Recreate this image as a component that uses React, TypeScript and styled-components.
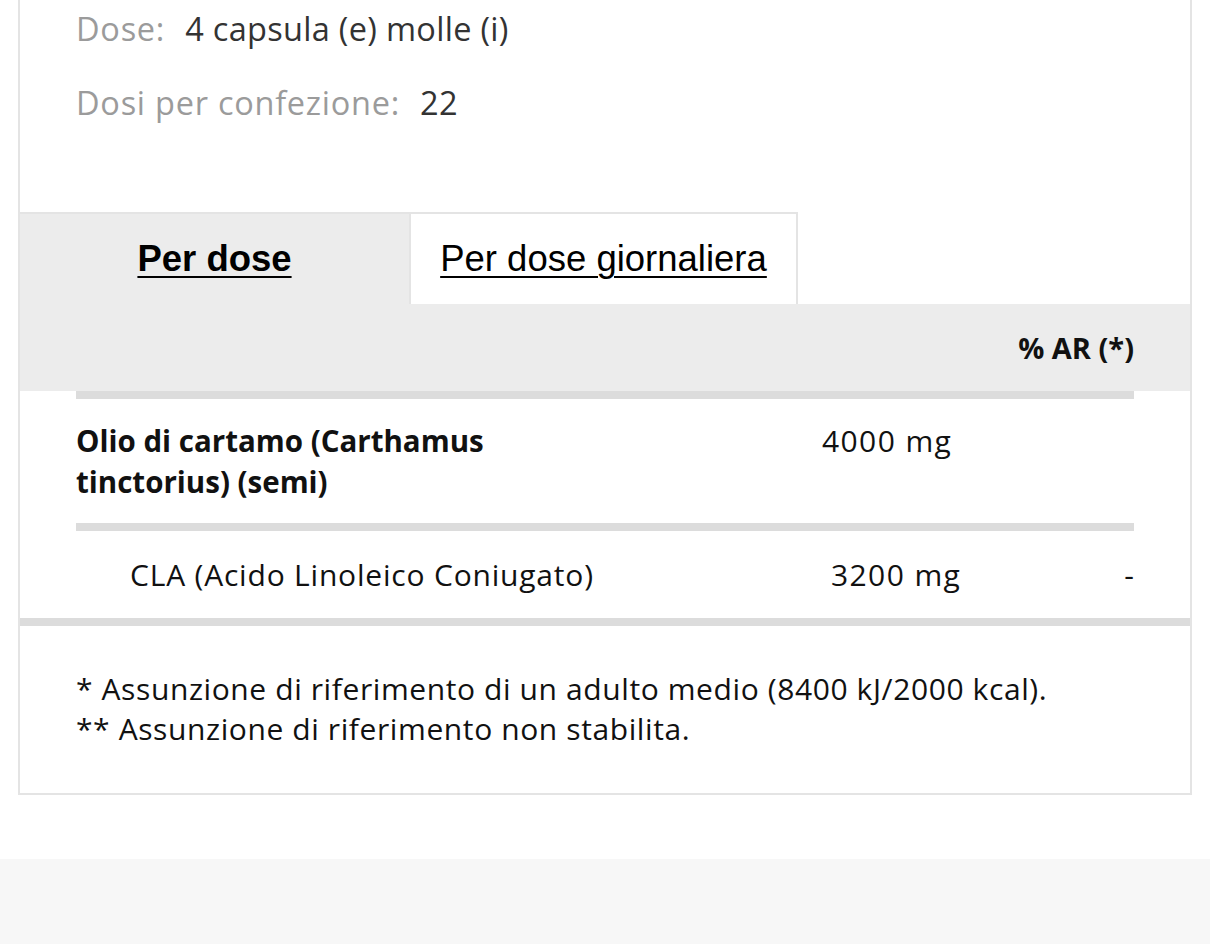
import React from "react";
import styled, { createGlobalStyle } from "styled-components";

const GlobalStyle = createGlobalStyle`
  html, body { margin: 0; padding: 0; background: #ffffff; }
  body { font-family: "Open Sans", "Noto Sans", Arial, sans-serif; color: #111; }
  * { box-sizing: border-box; }
`;

const Page = styled.div`
  display: flex;
  flex-direction: column;
  min-height: 944px;
`;

const Card = styled.section`
  margin: 0 18px 64px;
  border: 2px solid #e4e4e4;
  border-top: none;
  background: #fff;
`;

const Info = styled.div`
  display: flex;
  flex-direction: column;
  gap: 34px;
  padding: 8px 56px 90px;
`;

const InfoRow = styled.div`
  display: flex;
  align-items: center;
  gap: 20px;
  height: 40px;
  font-size: 32.5px;
  letter-spacing: 0.3px;
`;

const InfoLabel = styled.span`
  color: #9b9b9b;
  letter-spacing: 0.75px;
`;

const InfoValue = styled.span`
  color: #333;
`;

const Tabs = styled.div`
  display: flex;
  height: 92px;
`;

const Tab = styled.div<{ $active?: boolean }>`
  width: 389px;
  display: flex;
  align-items: center;
  justify-content: center;
  font-family: "Liberation Sans", Arial, sans-serif;
  font-size: 36.5px;
  color: #000;
  font-weight: ${(p) => (p.$active ? 700 : 400)};
  background: ${(p) => (p.$active ? "#ececec" : "#fff")};
  border-top: 2px solid #e4e4e4;
  ${(p) => (!p.$active ? "border-left: 2px solid #e4e4e4; border-right: 2px solid #e4e4e4;" : "")}
  span {
    text-decoration: underline;
    text-underline-offset: 5px;
    text-decoration-thickness: 2px;
  }
`;

const HeaderRow = styled.div`
  height: 87px;
  background: #ececec;
  display: flex;
  align-items: center;
  justify-content: flex-end;
  padding-right: 56px;
  font-size: 29px;
  font-weight: 700;
  color: #111;
`;

const Body = styled.div`
  padding: 0 56px;
`;

const Divider = styled.div`
  height: 8px;
  background: #dcdcdc;
`;

const FullDivider = styled.div`
  height: 8px;
  background: #dcdcdc;
`;

const Row = styled.div<{ $nameWidth: number; $pad: number }>`
  display: grid;
  grid-template-columns: ${(p) => p.$nameWidth}px 1fr auto;
  align-items: center;
  padding: ${(p) => p.$pad}px 0;
  font-size: 30px;
  letter-spacing: 0.8px;
  line-height: 41px;
  color: #111;
`;

const Name = styled.div<{ $bold?: boolean; $indent?: number }>`
  font-weight: ${(p) => (p.$bold ? 700 : 400)};
  font-size: ${(p) => (p.$bold ? "29.5px" : "inherit")};
  letter-spacing: ${(p) => (p.$bold ? "0" : "inherit")};
  padding-left: ${(p) => p.$indent ?? 0}px;
  max-width: ${(p) => (p.$bold ? "520px" : "none")};
  align-self: start;
`;

const Value = styled.div`
  align-self: start;
  letter-spacing: 1.4px;
`;

const Ar = styled.div`
  align-self: start;
  text-align: right;
  letter-spacing: 0;
`;

const Footer = styled.div`
  padding: 43px 56px 44px;
  font-size: 30px;
  letter-spacing: 0.6px;
  line-height: 40px;
  color: #111;
`;

const Band = styled.div`
  flex: 1;
  background: #f7f7f7;
  min-height: 85px;
`;

export default function App() {
  return (
    <>
      <GlobalStyle />
      <Page>
        <Card>
          <Info>
            <InfoRow>
              <InfoLabel>Dose:</InfoLabel>
              <InfoValue>4 capsula (e) molle (i)</InfoValue>
            </InfoRow>
            <InfoRow>
              <InfoLabel>Dosi per confezione:</InfoLabel>
              <InfoValue>22</InfoValue>
            </InfoRow>
          </Info>
          <Tabs>
            <Tab $active>
              <span>Per dose</span>
            </Tab>
            <Tab>
              <span>Per dose giornaliera</span>
            </Tab>
          </Tabs>
          <HeaderRow>% AR (*)</HeaderRow>
          <Body>
            <Divider />
            <Row $nameWidth={746} $pad={21}>
              <Name $bold>Olio di cartamo (Carthamus tinctorius) (semi)</Name>
              <Value>4000 mg</Value>
              <Ar></Ar>
            </Row>
            <Divider />
            <Row $nameWidth={755} $pad={23}>
              <Name $indent={54}>CLA (Acido Linoleico Coniugato)</Name>
              <Value>3200 mg</Value>
              <Ar>-</Ar>
            </Row>
          </Body>
          <FullDivider />
          <Footer>
            <div>* Assunzione di riferimento di un adulto medio (8400 kJ/2000 kcal).</div>
            <div>** Assunzione di riferimento non stabilita.</div>
          </Footer>
        </Card>
        <Band />
      </Page>
    </>
  );
}
